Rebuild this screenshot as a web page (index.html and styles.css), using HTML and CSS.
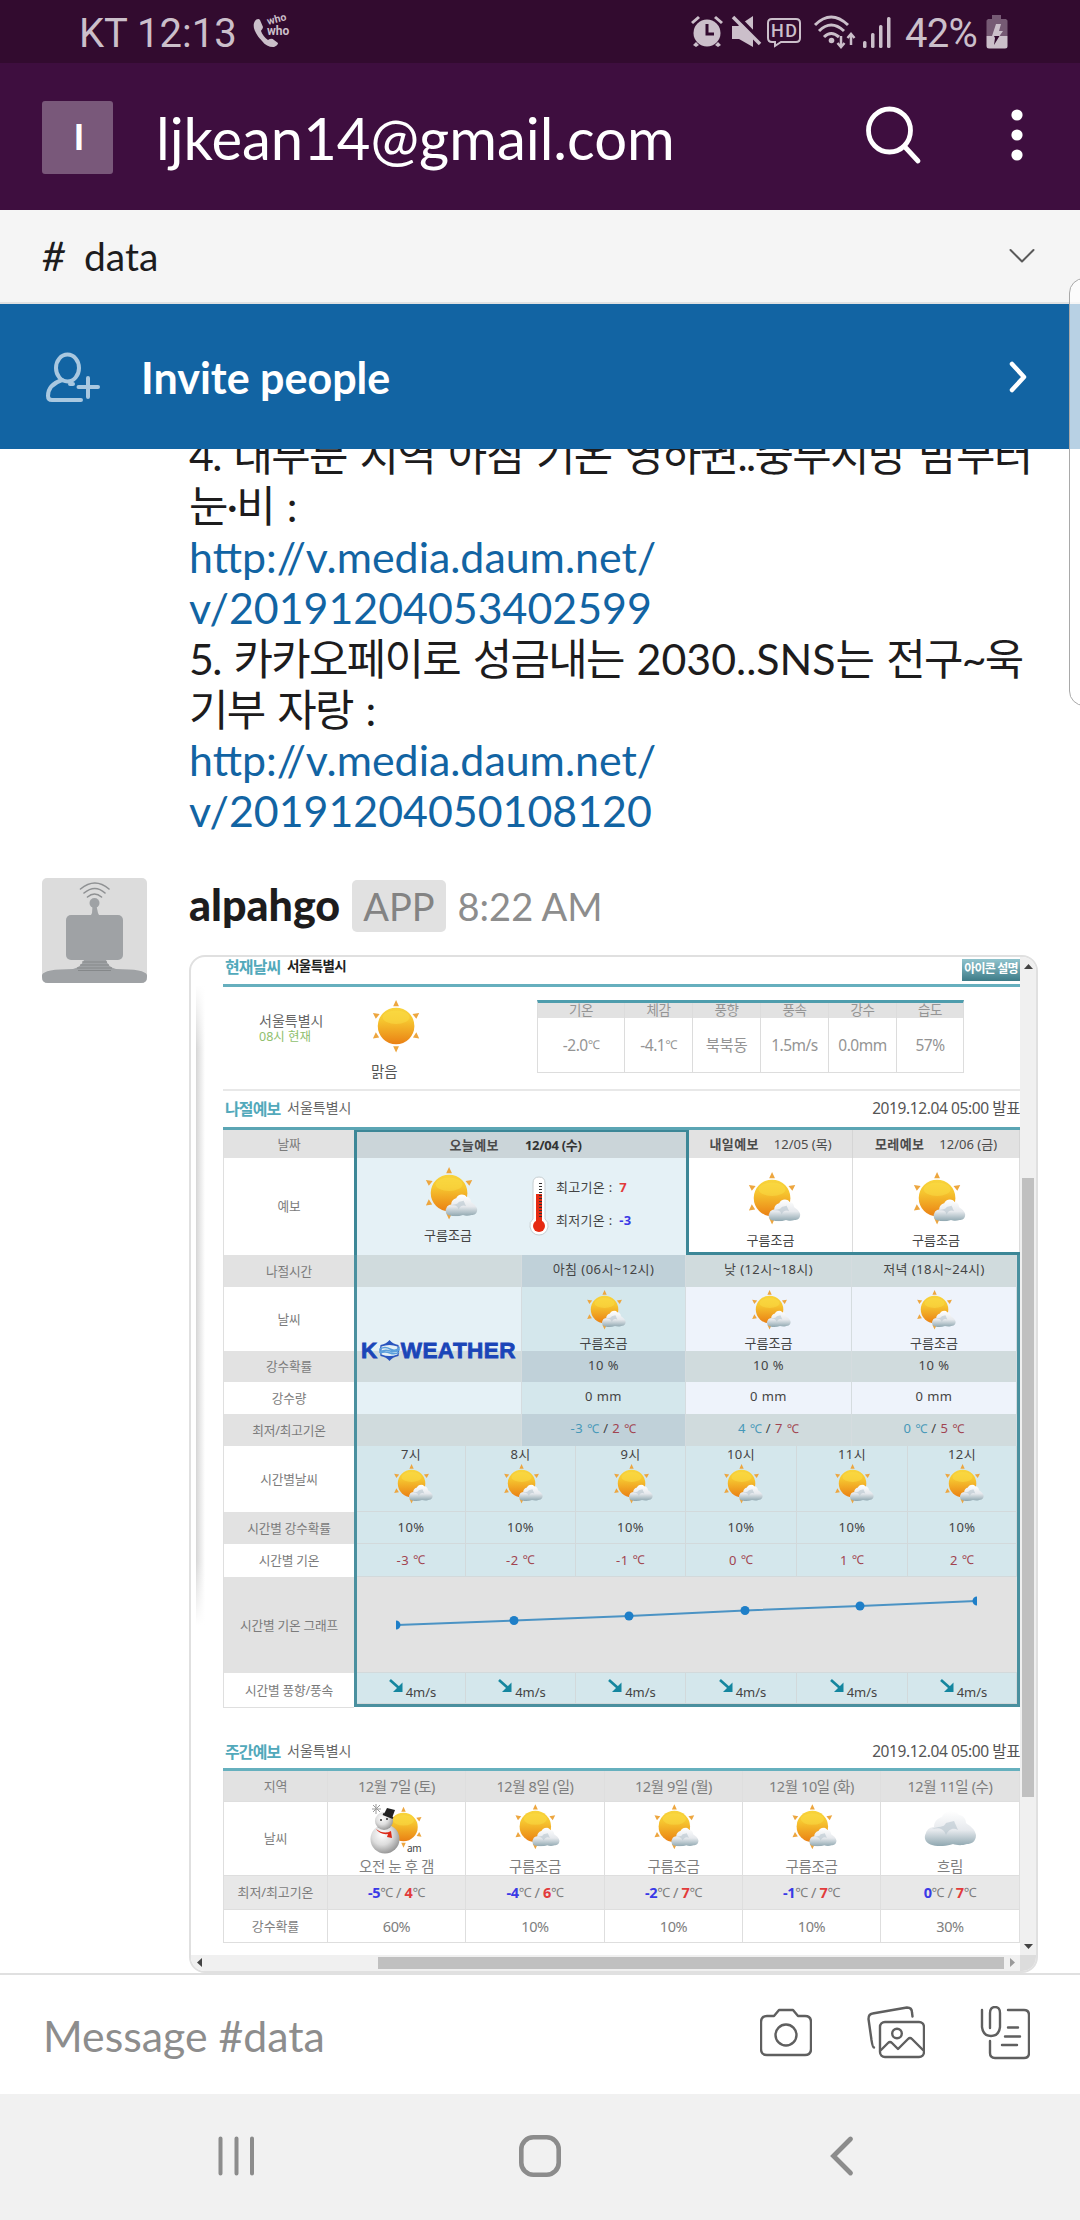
FILE: index.html
```html
<!DOCTYPE html>
<html lang="ko">
<head>
<meta charset="utf-8">
<title>#data</title>
<link rel="stylesheet" href="styles.css">
</head>
<body>
<svg class="defs" width="0" height="0" aria-hidden="true">
  <defs>
    <linearGradient id="sunFill" x1="0" y1="0" x2="0" y2="1">
      <stop offset="0" stop-color="#f8d43c"/><stop offset=".35" stop-color="#f6c52f"/><stop offset="1" stop-color="#ea8014"/>
    </linearGradient>
    <linearGradient id="cloudFill" x1="0" y1="0" x2="0" y2="1">
      <stop offset="0" stop-color="#ffffff"/><stop offset=".55" stop-color="#e6e9ed"/><stop offset="1" stop-color="#8fa7b0"/>
    </linearGradient>
    <radialGradient id="snowFill" cx=".4" cy=".35" r=".7">
      <stop offset="0" stop-color="#ffffff"/><stop offset=".5" stop-color="#dddddd"/><stop offset="1" stop-color="#8f8f8f"/>
    </radialGradient>
    <symbol id="sun" viewBox="-27 -28 58 56">
      <g fill="#eda63f"><path d="M-3-20.500 0-27 3-20.500zM-3 21 0 27.500 3 21zM-24-13.500-17-12.500-21-7.500zM24-13.500 17-12.500 21-7.500zM-24 13-17.500 12-21 6.500zM24 13 17.500 12 21 6.500z"/></g>
      <circle r="19" fill="url(#sunFill)"/><ellipse cy="-9" rx="14" ry="7" fill="#fbe04a" opacity=".45"/>
    </symbol>
    <symbol id="cloud" viewBox="0 0 52 36">
      <path d="M8 35C2 34-1 28 2 23c1-4 5-6 8-6 0-6 4-9 8-10 2-6 12-9 17-2 4 0 7 4 7 8 4 3 9 6 10 12 0 7-5 9-9 9-6 2-11 1-14 0-6 2-14 3-21 1z" fill="url(#cloudFill)"/>
      <path d="M8 19c8-2 12 0 14 6 2-5 7-8 12-5l-4-9-8 2c-2 5-8 3-14 6z" fill="#b3c1ca" opacity=".55"/>
    </symbol>
    <symbol id="partly" viewBox="-27 -28 58 56">
      <g fill="#eda63f"><path d="M-3-20.500 0-27 3-20.500zM-3 21 0 27.500 3 21zM-24-13.500-17-12.500-21-7.500zM24-13.500 17-12.500 21-7.500zM-24 13-17.500 12-21 6.500z"/></g>
      <circle r="19" fill="url(#sunFill)"/><ellipse cy="-9" rx="14" ry="7" fill="#fbe04a" opacity=".45"/>
      <use href="#cloud" x="-6" y="1" width="37" height="23"/>
    </symbol>
    <symbol id="wind" viewBox="0 0 15 14"><path d="M1 1 10 9" stroke="#14869f" stroke-width="2.600"/><path d="M13.500 3.500V13H4z" fill="#14869f"/></symbol>
  </defs>
</svg>
<div class="phone">
  <div class="status">
    <span class="carrier">KT 12:13</span>
    <svg class="who" width="40" height="34" viewBox="0 0 40 34" fill="#cbbfca">
      <path d="M2 7C3 5 6 4 7 6l3 7c0 2-2 3-2 4 1 3 4 7 7 9 2-1 4-2 6 0l4 3c0 2-3 4-5 4-4 0-8-2-11-6C4 22-2 13 2 7z"/>
      <text x="15" y="11" font-size="10.500" transform="rotate(-15 15 11)">who</text><text x="14" y="20.500" font-size="12">who</text>
    </svg>
    <div class="status-right">
      <svg width="34" height="33" viewBox="0 0 34 33"><g fill="#cbbfca"><circle cx="17" cy="18" r="13.500"/><path d="M1 7 8 1l2 2-7 6zM33 7l-7-6-2 2 7 6zM6 27l3 3-3 2-3-2zM28 27l-3 3 3 2 3-2z"/></g><path d="M17 9v10h7" fill="none" stroke="#320b2f" stroke-width="3"/></svg>
      <svg class="mute" width="31" height="33" viewBox="0 0 31 33"><path d="M1 11h6L22 1v31L8 24H1z" fill="#cbbfca"/><path d="M4-1 32 28" stroke="#320b2f" stroke-width="4"/><path d="M2 2 29 29" stroke="#cbbfca" stroke-width="3.500"/></svg>
      <svg class="hd" width="34" height="30" viewBox="0 0 34 30"><path d="M5 1h24q4 0 4 4v15q0 4-4 4H14l-6 4v-4H5q-4 0-4-4V5q0-4 4-4z" fill="none" stroke="#cbbfca" stroke-width="2"/><text x="17" y="19" font-size="18" font-weight="500" text-anchor="middle" fill="#cbbfca" textLength="26">HD</text></svg>
      <svg class="wifi" width="43" height="34" viewBox="0 0 43 34" fill="none" stroke="#cbbfca" stroke-width="3"><path d="M2 10q16-16 33 0M6 16q12-12 25 0M11 22q7-7 15 0"/><circle cx="18.500" cy="25.500" r="2.800" fill="#cbbfca" stroke="none"/><path d="M28 21v10M38 30V20" stroke-width="2.500"/><path d="m24.500 28 3.500 4 3.500-4M34.500 23l3.500-4 3.500 4" stroke-width="2.500"/></svg>
      <svg class="signal" width="28" height="31" viewBox="0 0 28 31" fill="#cbbfca"><rect y="24" width="3.500" height="7" rx="1.500"/><rect x="8" y="16" width="3.500" height="15" rx="1.500"/><rect x="16" y="8" width="3.500" height="23" rx="1.500"/><rect x="24" width="3.500" height="31" rx="1.500"/></svg>
      <span class="pct">42%</span>
      <svg class="batt" width="22" height="34" viewBox="0 0 22 34"><path d="M6 0h9v4h5l1.500 1.500V21H.500V5.500L2 4h4z" fill="#765a74"/><path d="M.500 21h21v10q0 2.500-2.500 2.500H3Q.500 33.500.500 31z" fill="#cbbfca"/><path d="M10 9h5l-2 7h4l-3.500 5H6z" fill="#cbbfca"/><path d="M8 21h5.500L8 30l1-7z" fill="#320b2f"/></svg>
    </div>
  </div>

  <header class="appbar">
    <div class="team">I</div>
    <h1>ljkean14@gmail.com</h1>
    <svg class="search" width="58" height="60" viewBox="0 0 58 60" fill="none" stroke="#fff" stroke-width="4.800" stroke-linecap="round"><ellipse cx="24.500" cy="25.500" rx="21" ry="21.500"/><path d="M40 42 53 56"/></svg>
    <svg class="more" width="12" height="54" viewBox="0 0 12 54" fill="#fff"><circle cx="6" cy="7" r="5.600"/><circle cx="6" cy="27" r="5.600"/><circle cx="6" cy="47" r="5.600"/></svg>
  </header>

  <div class="channel">
    <span class="hash">#</span><span class="cname">data</span>
    <svg width="26" height="16" viewBox="0 0 26 16" fill="none" stroke="#5a5a5a" stroke-width="2" stroke-linecap="round" stroke-linejoin="round"><path d="m1.500 2 11.500 11.500L24.500 2"/></svg>
  </div>

  <div class="invite">
    <svg width="54" height="50" viewBox="0 0 54 50" fill="none" stroke="#a9c8e0" stroke-width="4" stroke-linecap="round"><ellipse cx="21.500" cy="16" rx="11.500" ry="13.500"/><path d="M16 28C7 31 2 37 2 44q0 4 4 4h29M24 32h3M42 26v19M32.500 35h19.500"/></svg>
    <span>Invite people</span>
    <svg class="go" width="20" height="32" viewBox="0 0 20 32" fill="none" stroke="#fff" stroke-width="4.500" stroke-linecap="round" stroke-linejoin="round"><path d="m4 3 12 13L4 29"/></svg>
  </div>

  <main class="chat">
    <div class="message first">
      <p class="ko">4. 대부분 지역 아침 기온 영하권..중부지방 밤부터</p>
      <p class="ko">눈·비 :</p>
      <p><a>http://v.media.daum.net/</a></p>
      <p><a>v/20191204053402599</a></p>
      <p class="ko">5. 카카오페이로 성금내는 <span class="latin">2030..SNS</span>는 전구~욱</p>
      <p class="ko">기부 자랑 :</p>
      <p><a>http://v.media.daum.net/</a></p>
      <p><a>v/20191204050108120</a></p>
    </div>

    <div class="message bot">
      <svg class="avatar" width="105" height="105" viewBox="0 0 105 105"><rect width="105" height="105" rx="5" fill="#dcdcdc"/><g fill="none" stroke="#8f9193" stroke-width="1.600" stroke-linecap="round"><path d="M38.500 11Q53-1 67 11M42 15q11-9 21 0M45.500 19q7-6 14 0"/></g><g fill="#9fa2a5"><circle cx="52.500" cy="25" r="5"/><path d="M50.500 28h4l1.500 7 1.500 3h-9l1.500-3z"/><rect x="24" y="37" width="57" height="45" rx="5"/><path d="M42 82h22q2 7 10 9 29 0 31 6v2q0 6-6 6H6q-6 0-6-6v-2q2-6 31-6 8-2 11-9z"/></g><path d="M40 84h25M38 87h29M35 90h35M36 92.500h33" stroke="#85888a" stroke-width="1.100"/></svg>
      <div class="content">
        <div class="byline"><b>alpahgo</b><span class="badge">APP</span><time>8:22 AM</time></div>
        <div class="shot">
          <div class="page">
            <div class="sec top"><h2>현재날씨</h2><strong>서울특별시</strong><span class="help">아이콘 설명</span></div>
            <div class="now">
              <div class="place">서울특별시<em>08시 현재</em></div>
              <div class="sky"><svg width="56" height="54"><use href="#sun"/></svg><span>맑음</span></div>
              <div class="stats">
                <b>기온</b><b>체감</b><b>풍향</b><b>풍속</b><b>강수</b><b>습도</b>
                <span>-2.0<i>℃</i></span><span>-4.1<i>℃</i></span><span>북북동</span><span>1.5m/s</span><span>0.0mm</span><span>57%</span>
              </div>
            </div>
            <div class="sec mid"><h2>나절예보</h2><span class="city">서울특별시</span><span class="date">2019.12.04 05:00 발표</span></div>
            <div class="forecast">
              <div class="labels">
                <div class="g">날짜</div><div>예보</div><div class="g">나절시간</div><div>날씨</div><div class="g">강수확률</div><div>강수량</div><div class="g">최저/최고기온</div><div>시간별날씨</div><div class="g">시간별 강수확률</div><div>시간별 기온</div><div class="g">시간별 기온 그래프</div><div>시간별 풍향/풍속</div>
              </div>
              <div class="main">
                <div class="days">
                  <div class="today">
                    <div class="dh"><b>오늘예보</b><b class="dd">12/04 (수)</b></div>
                    <div class="db">
                      <div class="ic"><svg width="56" height="56"><use href="#partly"/></svg><span>구름조금</span></div>
                      <svg width="20" height="60" viewBox="0 0 20 60"><path d="M10 1q6 0 6 6v36q4 3 3 8-2 8-9 8t-9-8q-1-5 3-8V7q0-6 6-6z" fill="#fff" stroke="#c7ced1"/><circle cx="10" cy="50" r="6" fill="#e62a12"/><path d="M7 18h6v28H7z" fill="#e62a12"/><path d="M11.500 7v35" stroke="#333" stroke-width="3" stroke-dasharray="1 2"/></svg>
                      <div class="hl"><p>최고기온 : <b class="red">7</b></p><p>최저기온 : <b class="blue">-3</b></p></div>
                    </div>
                  </div>
                  <div class="day"><div class="dh"><b>내일예보</b><span class="dd">12/05 (목)</span></div><div class="db ic"><svg width="56" height="56"><use href="#partly"/></svg><span>구름조금</span></div></div>
                  <div class="day last"><div class="dh"><b>모레예보</b><span class="dd">12/06 (금)</span></div><div class="db ic"><svg width="56" height="56"><use href="#partly"/></svg><span>구름조금</span></div></div>
                </div>
                <div class="detail">
                  <div class="parts">
                    <div class="g"></div><div class="g am">아침 (06시~12시)</div><div class="g">낮 (12시~18시)</div><div class="g">저녁 (18시~24시)</div>
                    <div class="pale"></div><div class="am ic"><svg width="42" height="41"><use href="#partly"/></svg><span>구름조금</span></div><div class="ic"><svg width="42" height="41"><use href="#partly"/></svg><span>구름조금</span></div><div class="ic"><svg width="42" height="41"><use href="#partly"/></svg><span>구름조금</span></div>
                    <div class="g"></div><div class="g am">10 %</div><div class="g">10 %</div><div class="g">10 %</div>
                    <div class="pale"></div><div class="am">0 mm</div><div>0 mm</div><div>0 mm</div>
                    <div class="g"></div><div class="g am"><span class="lo">-3 <i>℃</i></span>&nbsp;/&nbsp;<span class="hi">2 <i>℃</i></span></div><div class="g"><span class="lo">4 <i>℃</i></span>&nbsp;/&nbsp;<span class="hi">7 <i>℃</i></span></div><div class="g"><span class="lo">0 <i>℃</i></span>&nbsp;/&nbsp;<span class="hi">5 <i>℃</i></span></div>
                    <div class="logo">K<svg width="21" height="21" viewBox="0 0 21 21"><path d="M10.500 0q3 4 9 5 1.500 5 0 11-6 1-9 5-3-4-9-5-1.500-6 0-11 6-1 9-5z" fill="#2a55be"/><path d="M2.500 6.500q8-3 16 0v8q-8 3-16 0z" fill="#e4f0f6"/><path d="M1 9q5-3 10 0t9-1v2q-4 3-9 1t-10 1zM1 13q5-2 10 0t9-1" stroke="#5a9fdc" stroke-width="1.500" fill="none"/></svg>WEATHER</div>
                  </div>
                  <div class="hours">
                    <div class="hr"><p>7시</p><svg width="42" height="41"><use href="#partly"/></svg></div><div class="hr"><p>8시</p><svg width="42" height="41"><use href="#partly"/></svg></div><div class="hr"><p>9시</p><svg width="42" height="41"><use href="#partly"/></svg></div><div class="hr"><p>10시</p><svg width="42" height="41"><use href="#partly"/></svg></div><div class="hr"><p>11시</p><svg width="42" height="41"><use href="#partly"/></svg></div><div class="hr"><p>12시</p><svg width="42" height="41"><use href="#partly"/></svg></div>
                    <div>10%</div><div>10%</div><div>10%</div><div>10%</div><div>10%</div><div>10%</div>
                    <div class="hi">-3<i>℃</i></div><div class="hi">-2<i>℃</i></div><div class="hi">-1<i>℃</i></div><div class="hi">0<i>℃</i></div><div class="hi">1<i>℃</i></div><div class="hi">2<i>℃</i></div>
                    <div class="graph"><svg width="660" height="96" viewBox="0 0 660 96"><path d="M40 49 157 44.500 272 40 388 34.500 503 30 619 25" fill="none" stroke="#4b93c4" stroke-width="2"/><g fill="#1f7fc8"><circle cx="157" cy="44.500" r="4.500"/><circle cx="272" cy="40" r="4.500"/><circle cx="388" cy="34.500" r="4.500"/><circle cx="503" cy="30" r="4.500"/><path d="M39 44.500a4.500 4.500 0 0 1 0 9zM620 20.500a4.500 4.500 0 0 0 0 9z"/></g></svg></div>
                    <div class="wd"><svg width="15" height="14"><use href="#wind"/></svg><span>4m/s</span></div><div class="wd"><svg width="15" height="14"><use href="#wind"/></svg><span>4m/s</span></div><div class="wd"><svg width="15" height="14"><use href="#wind"/></svg><span>4m/s</span></div><div class="wd"><svg width="15" height="14"><use href="#wind"/></svg><span>4m/s</span></div><div class="wd"><svg width="15" height="14"><use href="#wind"/></svg><span>4m/s</span></div><div class="wd"><svg width="15" height="14"><use href="#wind"/></svg><span>4m/s</span></div>
                  </div>
                </div>
              </div>
            </div>
            <div class="sec week-title"><h2>주간예보</h2><span class="city">서울특별시</span><span class="date">2019.12.04 05:00 발표</span></div>
            <div class="week">
              <div class="g lb">지역</div><div class="g">12월 7일 (토)</div><div class="g">12월 8일 (일)</div><div class="g">12월 9일 (월)</div><div class="g">12월 10일 (화)</div><div class="g">12월 11일 (수)</div>
              <div class="lb">날씨</div>
              <div class="ic"><svg width="54" height="51" viewBox="0 0 54 51"><use href="#sun" x="13" y="3" width="44" height="42"/><circle cx="15" cy="36" r="14.500" fill="url(#snowFill)"/><circle cx="14" cy="18" r="9" fill="url(#snowFill)"/><path d="M14 11 17 5l8 2-3 8z" fill="#222"/><path d="m13 11 10 4" stroke="#222" stroke-width="2"/><path d="M6 26q8 6 15 2l1 7-5-1 1-3q-8 1-12-5z" fill="#dc2a18"/><path d="M2 6h9M6 1v10M3 2l7 7M10 2 3 9" stroke="#999" stroke-width="1"/><circle cx="11" cy="17" r="1" fill="#333"/><circle cx="17" cy="16" r="1" fill="#333"/><text x="37" y="49" font-size="10" fill="#444">am</text></svg><span>오전 눈 후 갬</span></div>
              <div class="ic"><svg width="48" height="47"><use href="#partly"/></svg><span>구름조금</span></div><div class="ic"><svg width="48" height="47"><use href="#partly"/></svg><span>구름조금</span></div><div class="ic"><svg width="48" height="47"><use href="#partly"/></svg><span>구름조금</span></div><div class="ic"><svg width="52" height="36"><use href="#cloud"/></svg><span>흐림</span></div>
              <div class="g2 lb">최저/최고기온</div><div class="g2"><b class="blue">-5</b><i>℃</i>&nbsp;/&nbsp;<b class="red">4</b><i>℃</i></div><div class="g2"><b class="blue">-4</b><i>℃</i>&nbsp;/&nbsp;<b class="red">6</b><i>℃</i></div><div class="g2"><b class="blue">-2</b><i>℃</i>&nbsp;/&nbsp;<b class="red">7</b><i>℃</i></div><div class="g2"><b class="blue">-1</b><i>℃</i>&nbsp;/&nbsp;<b class="red">7</b><i>℃</i></div><div class="g2"><b class="blue">0</b><i>℃</i>&nbsp;/&nbsp;<b class="red">7</b><i>℃</i></div>
              <div class="lb">강수확률</div><div>60%</div><div>10%</div><div>10%</div><div>10%</div><div>30%</div>
            </div>
          </div>
          <div class="vbar"><svg width="9" height="5" viewBox="0 0 9 5"><path d="M0 5 4.500 0 9 5z"/></svg><div class="thumb"></div><svg width="9" height="5" viewBox="0 0 9 5"><path d="M0 0 4.500 5 9 0z"/></svg></div>
          <div class="hbar"><svg width="5" height="9" viewBox="0 0 5 9"><path d="M5 0 0 4.500 5 9z"/></svg><div class="thumb"></div><svg width="5" height="9" viewBox="0 0 5 9"><path d="M0 0 5 4.500 0 9z" fill="#999"/></svg></div>
          <div class="corner"></div>
        </div>
      </div>
    </div>
  </main>

  <footer class="composer">
    <span>Message #data</span>
    <svg class="cam" width="52" height="54" viewBox="0 0 52 54"><path d="M7 10h7l5-6h14l5 6h7q6 0 6 6v27q0 6-6 6H7q-6 0-6-6V16q0-6 6-6z"/><circle cx="26" cy="29" r="10.500"/></svg>
    <svg class="pics" width="58" height="54" viewBox="0 0 58 54"><rect x="13" y="16" width="44" height="35" rx="5"/><circle cx="30" cy="27.500" r="4.800"/><path d="m14 44 7-7q2-2 4 0l6 6 10-10q2-2 4 0l11 11M7 41.500C5.500 41.500 5 37 4.500 34L1.500 13q0-5 4-5.500L40 1.500q5 0 5 5l.5 4"/></svg>
    <svg class="note" width="50" height="54" viewBox="0 0 50 54"><path d="M2 4v17q1 9 9 9t9-9V7q0-6-5-6t-5 6v15M28 4h16q5 0 5 5v38q0 5-5 5H15q-5 0-5-5V35M28 21.500h10M25 30.500h15M22 39h15"/></svg>
  </footer>

  <nav class="nav">
    <svg width="36" height="42" viewBox="0 0 36 42" stroke="#8c8c8c" stroke-width="4" stroke-linecap="round"><path d="M2.500 3.500v35M18.500 3.500v35M34 3.500v35"/></svg>
    <svg class="home" width="42" height="42" viewBox="0 0 42 42" fill="none" stroke="#8c8c8c" stroke-width="4.600"><rect x="2.300" y="2.300" width="37.400" height="37.400" rx="12"/></svg>
    <svg width="24" height="42" viewBox="0 0 24 42" fill="none" stroke="#8c8c8c" stroke-width="4.800" stroke-linecap="round"><path d="M20.500 4 3.500 21l17 17"/></svg>
  </nav>
  <div class="edge"></div>
</div>
</body>
</html>
```

FILE: styles.css
```css
* { box-sizing: border-box; margin: 0; padding: 0; }
body { width: 1080px; height: 2220px; overflow: hidden; background: #fff; font-family: Lato, "Noto Sans CJK KR", sans-serif; color: #1d1c1d; }
svg { display: block; flex: none; }
.defs { position: absolute; }
.phone { position: relative; width: 1080px; height: 2220px; display: flex; flex-direction: column; overflow: hidden; }
.phone > * { flex: none; }

.status { height: 63px; background: #320b2f; color: #cbbfca; font: 40px/68px Roboto, sans-serif; display: flex; padding: 0 72px 0 79px; }
.status text { font-family: Roboto, sans-serif; }
.carrier { width: 174px; }
.who { margin-top: 14px; overflow: visible; }
.who text { font-weight: 700; }
.status-right { margin-left: auto; display: flex; }
.status-right > svg { margin-top: 15px; }
.mute { margin-left: 7px; }
.status-right > .hd { margin: 18px 0 0 5px; }
.wifi { margin-left: 12px; }
.status-right > .signal { margin: 17px 0 0 7px; }
.pct { margin-left: 14px; width: 81px; letter-spacing: -.7px; }

.appbar { height: 147px; background: #3e0e3f; display: flex; align-items: flex-start; color: #fff; padding-left: 42px; }
.team { width: 71px; height: 73px; margin-top: 38px; border-radius: 3px; background: #79587a; text-align: center; font: 700 37px/70px Lato, sans-serif; padding-left: 3px; }
.appbar h1 { width: 703px; margin-left: 43px; font: 400 58px/76px Lato, sans-serif; padding-top: 37px; white-space: nowrap; }
.search { margin: 42px 0 0 6px; }
.more { margin: 45px 0 0 88px; }

.channel { height: 94px; background: #f5f5f5; border-bottom: 2px solid #dfe1e2; display: flex; align-items: center; padding: 0 45px 0 42px; font-size: 39px; line-height: 92px; }
.hash { width: 42px; transform: skewX(-4deg); font-size: 41px; }
.channel svg { margin-left: auto; }
.invite { height: 145px; background: #1264a3; display: flex; align-items: center; padding: 0 52px 0 46px; color: #fff; font-weight: 700; font-size: 43px; line-height: 145px; }
.invite span { margin-left: 41px; padding-top: 1px; }
.go { margin-left: auto; }

.chat { height: 1524px; overflow: hidden; }
.first { margin: -19px 0 0 189px; font-size: 42.900px; line-height: 50.900px; white-space: nowrap; }
.ko { letter-spacing: -1.700px; word-spacing: 3.500px; }
.latin { letter-spacing: 0; }
.first a { color: #1264a3; }
.bot { display: flex; padding-left: 42px; margin-top: 40.500px; }
.avatar { margin-right: 42px; }
.byline { display: flex; align-items: baseline; height: 54px; padding-top: 2px; font-size: 38px; line-height: 52px; color: #8d8d8d; }
.byline b { color: #1d1c1d; font-weight: 900; font-size: 43px; line-height: 48px; }
.badge { background: #e1e1e1; border-radius: 5px; padding: 0 11px; margin: 0 12px; color: #838383; }

.shot { margin-top: 23px; width: 849px; height: 1018px; border: 2px solid #e0e0e0; border-radius: 16px; overflow: hidden; display: grid; grid-template: 998px 16px / 829px 16px; background: #fff; font-family: "Noto Sans", "Noto Sans CJK KR", sans-serif; font-size: 13px; line-height: 16px; color: #4b4b4b; }
.shot i { font-style: normal; font-size: 12px; }
.page { padding-left: 32px; background: linear-gradient(#fff, transparent 10%, transparent 90%, #fff) 5px 28px / 9px 640px no-repeat, linear-gradient(90deg, #d6d6d6, #fff) 5px 28px / 9px 640px no-repeat; }
.sec { display: flex; align-items: center; font-size: 14px; white-space: nowrap; }
.sec h2 { font-size: 16px; letter-spacing: -.9px; color: #52a9bb; width: 64px; padding-left: 2px; }
.sec strong { font-size: 13.500px; letter-spacing: -.6px; color: #222; padding-bottom: 3px; }
.city { letter-spacing: 0; color: #666; padding-bottom: 1px; }
.date { margin-left: auto; font-size: 15.500px; letter-spacing: -.4px; color: #555; padding-bottom: 1px; }
.top { height: 30px; padding-bottom: 6px; border-bottom: 3px solid #66afbe; }
.help { align-self: flex-start; margin: 2px 0 -8px auto; width: 58px; height: 22px; font-weight: 700; font-size: 12px; line-height: 20px; letter-spacing: -.8px; text-align: center; color: #fff; background: linear-gradient(#8fc3cd, #3e7c88); }
.now { height: 104px; border-bottom: 2px solid #e8e8e8; display: flex; }
.place { width: 147px; padding: 26px 0 0 36px; font-size: 14px; color: #666; white-space: nowrap; letter-spacing: 0; }
.place em { display: block; font-style: normal; font-size: 12.500px; color: #8fc06e; }
.sky { width: 56px; display: flex; flex-direction: column; margin-top: 12px; font-size: 14.500px; color: #555; }
.sky span { margin: 10px 0 0 1px; }
.stats { margin: 13px 0 0 111px; width: 427px; height: 73px; display: grid; grid-template: 15px 1fr / 86px 68px 68px 68px 68px 1fr; border: 1px solid #ddd; border-top: 3px solid #4e9dad; color: #949494; font-size: 15.500px; letter-spacing: -.5px; }
.stats > * { display: flex; align-items: center; justify-content: center; font-weight: 400; }
.stats b { background: #e2e2e2; font-size: 13.500px; line-height: 15px; }
.stats > * + * { border-left: 1px solid #dcdcdc; }
.stats span:nth-of-type(1) { border-left: 0; }
.mid { height: 36px; }
.forecast { display: grid; grid-template-columns: 131px 666px; border-top: 3px solid #5ba5b4; height: 580px; }
.labels, .parts, .hours, .week { display: grid; }
.labels { grid-template-rows: 28px 97px 32px 64px 31px 32px 32px 66px 32px 33px 96px 34px; border: solid #dfdfdf; border-width: 0 0 1px 1px; color: #7b7b7b; }
.labels > *, .parts > *, .hours > *, .week > * { display: flex; align-items: center; justify-content: center; white-space: nowrap; }
.labels > * { font-size: 12.700px; letter-spacing: -.2px; }
.g { background: #e2e2e2; }
.days { display: grid; grid-template-columns: 335px 164px 1fr; height: 125px; }
.today { border: solid #3c8797; border-width: 2px 3px 0; background: #e5f1f6; }
.dh { height: 28px; display: flex; align-items: center; justify-content: center; gap: 15px; background: #e2e2e2; border-right: 1px solid #d5d5d5; }
.dh b { letter-spacing: .4px; }
.today .dh { background: #cbd5d9; height: 26px; gap: 26px; border: 0; padding-right: 12px; }
.today .dd { color: #333; letter-spacing: -.3px; }
.today .db { display: flex; }
.ic span, .today p { color: #444; }
.ic svg + span { margin-top: 6px; }
.today .ic { width: 68px; margin: 7px 0 0 57px; display: flex; flex-direction: column; align-items: center; }
.today .ic svg { margin-left: 5px; }
.today .db > svg { margin: 18px 0 0 47px; }
.hl { margin: 21px 0 0 7px; font-size: 13px; letter-spacing: .3px; }
.hl p { height: 33px; }
.hl b { margin-left: 3px; }
.red { color: #e23b3b; } .blue { color: #3a3ae6; }
.day { border-bottom: 3px solid #3c8797; }
.day .db { height: 94px; display: flex; flex-direction: column; align-items: center; padding-top: 12px; border-right: 1px solid #dcdcdc; }
.day .db svg { margin-left: 6px; }
.detail { border: solid #4a909f; border-width: 0 3px 3px; height: 452px; }
.parts { position: relative; grid-template: 32px 64px 31px 32px 32px / 165px 164px 166px 165px; background: #eef3fb; color: #444; letter-spacing: .45px; }
.parts > * { border-right: 1px solid #d5dcdf; padding-bottom: 3px; }
.parts .g { background: #d0dbdd; }
.parts .pale { background: #e5f1f6; }
.parts .am { background: #d4e7ec; }
.parts .g.am { background: #c0d1d9; }
.parts .ic, .week .ic { flex-direction: column; justify-content: flex-start; padding: 2px 0 0; }
.parts .ic svg + span { margin-top: 5px; line-height: 16px; letter-spacing: 0; }
.parts .ic svg, .hr svg { margin-left: 4px; }
.parts .lo { color: #4698b8; } .hi, .hours .hi { color: #a14450; }
.parts .logo { position: absolute; left: 4px; top: 85px; border: 0; padding: 0; font: 700 22.500px/22px "Liberation Sans", sans-serif; color: #1b45b8; -webkit-text-stroke: .8px #1b45b8; gap: 1px; }
.hours { grid-template: 66px 32px 33px 96px 31px / 109px 110px 110px 111px 111px 109px; background: #d4e7ec; letter-spacing: .4px; }
.hours > * { border: solid #d2d9db; border-width: 0 1px 1px 0; color: #444; }
.hours i { margin-left: 4px; }
.hours .hr { flex-direction: column; justify-content: flex-start; }
.hr p { height: 17px; line-height: 16px; }
.hours .graph { grid-column: 1 / -1; background: #e2e2e2; border-right: 0; }
.wd { gap: 2px; padding-left: 3px; }
.wd svg { margin-bottom: 4px; }
.wd span { padding-top: 8px; letter-spacing: 0; }
.week-title { margin-top: 29px; height: 32px; }
.week { border-top: 3px solid #66b0be; grid-template: 31px 74px 34px 33px / 105px 138px 139px 138px 138px 139px; font-size: 14.500px; color: #7e7e7e; letter-spacing: -.4px; }
.week > * { border: solid #dedede; border-width: 0 1px 1px 0; }
.week > .lb { border-left-width: 1px; font-size: 13px; letter-spacing: -.1px; }
.g2 { background: #e8e8e8; }
.week .ic span { color: #7e7e7e; margin-top: auto; line-height: 18px; }
.week .ic { padding-top: 1px; }
.week .ic svg[height="36"] { margin-top: 7px; }
.week .ic svg[width="48"] { margin-left: 4px; }
.week i { font-size: 13px; }
.vbar { background: #f0f0f0; display: flex; flex-direction: column; align-items: center; justify-content: space-between; padding: 7px 0 6px; }
.vbar .thumb { width: 12px; height: 619px; background: #c0c0c0; margin-top: 62px; }
.vbar svg, .hbar svg { fill: #444; }
.hbar { background: #f0f0f0; display: flex; align-items: center; padding-left: 6px; }
.hbar .thumb { width: 626px; height: 12px; background: #c0c0c0; margin: 0 6px 0 176px; }
.corner { background: #dcdcdc; }

.composer { height: 121px; border-top: 2px solid #e0e0e0; display: flex; align-items: flex-start; padding: 0 50px 0 43px; font-size: 42.800px; line-height: 121px; color: #8d8d8d; background: #fff; }
.composer span { margin-right: auto; }
.composer svg { fill: none; stroke: #5f5f5f; stroke-width: 2.400; stroke-linecap: round; stroke-linejoin: round; margin-top: 31px; }
.pics { margin: 0 55px; }
.nav { height: 126px; background: #f1f1f1; display: flex; justify-content: space-between; align-items: flex-start; padding: 41px 226px 0 218px; }
.home { margin-right: 5px; }
.edge { position: absolute; left: 1069px; top: 278px; width: 30px; height: 428px; border: 1.500px solid #a9a9a9; border-radius: 20px; background: rgba(255,255,255,.7); }
```
